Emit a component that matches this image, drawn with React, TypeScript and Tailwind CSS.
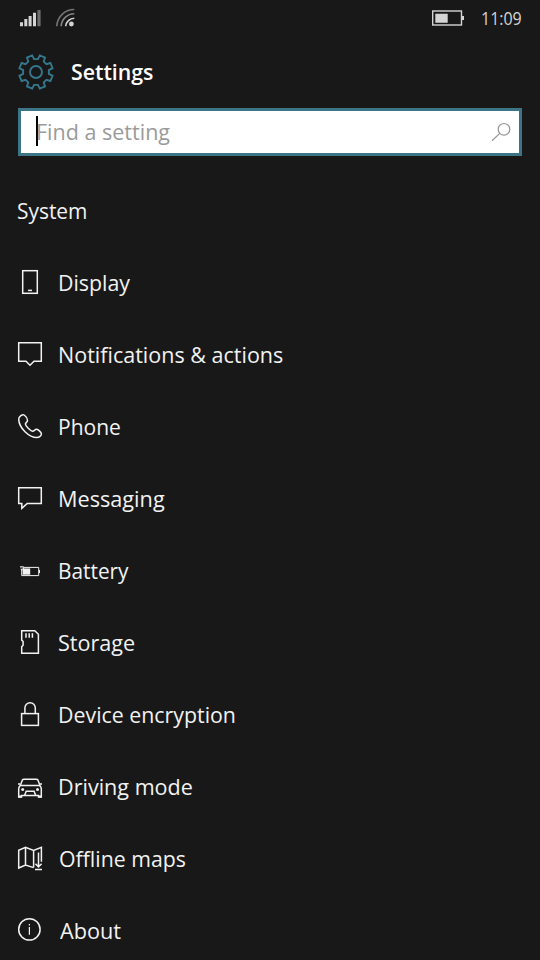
import React from "react";

type Item = { label: string; icon: React.ReactNode; className: string };

const gearPath = () => {
  const points: string[] = [];
  const add = (r: number, deg: number) => {
    const a = (deg * Math.PI) / 180;
    points.push(`${(18 + r * Math.cos(a)).toFixed(2)} ${(18 + r * Math.sin(a)).toFixed(2)}`);
  };
  for (let i = 0; i < 8; i++) {
    const mid = 22.5 + i * 45;
    add(13, mid - 14);
    add(17, mid - 9.5);
    add(17, mid + 9.5);
    add(13, mid + 14);
  }
  return `M${points.join("L")}Z`;
};

const items: Item[] = [
  {
    label: "Display",
    className: "scale-x-[0.97]",
    icon: (
      <>
        <rect x="8.7" y="3.7" width="14.6" height="22.6" />
        <path d="M14 23.4h4" />
      </>
    ),
  },
  {
    label: "Notifications & actions",
    className: "scale-x-[0.978]",
    icon: <path d="M4.7 3.7h22.6v18.6H20l-4 3.9-4-3.9H4.7Z" />,
  },
  {
    label: "Phone",
    className: "scale-x-[0.955]",
    icon: (
      <path d="M10.2 4C8.7 2.8 4.6 5.6 4.7 8.4C4.9 12.6 7.2 17 11 20.7C14.5 24.1 19.3 26.5 22.9 26.5C25.3 26.5 27.4 24.8 27.4 23.1C27.4 21.4 24.3 18.5 22.6 18.3C21 18.1 20 20.5 18.5 20.3C16.6 20 11.4 15 11.4 13C11.4 11.7 13.7 11.3 13.5 9.3C13.4 7.6 11.7 5.1 10.2 4Z" />
    ),
  },
  {
    label: "Messaging",
    className: "scale-x-[0.985]",
    icon: <path d="M4.7 4.8h22.6v15.6H13.2L7.8 25.4v-5H4.7Z" />,
  },
  {
    label: "Battery",
    className: "scale-x-[0.947]",
    icon: (
      <>
        <path d="M10 12.4h14.7v8.2H7.7v-5.4" strokeWidth="1" />
        <path d="M25.5 15v3" strokeWidth="1" />
        <path d="M8.6 13.4h7.6v6.3H8.6Z" fill="currentColor" stroke="none" />
        <path d="M6 12h3.4v2.2H6.6M7 11v1M9 11v1M7.7 14v2" strokeWidth="0.9" />
      </>
    ),
  },
  {
    label: "Storage",
    className: "scale-x-[0.98]",
    icon: (
      <>
        <path d="M7.7 3.8h13.1l3.6 3.5v19H7.7v-6.6l1.4-1.5v-3.6l-1.4-1.5Z" />
        <path d="M12 6.3v4.4M15.2 6.3v4.4M18.4 6.3v4.4" />
      </>
    ),
  },
  {
    label: "Device encryption",
    className: "scale-x-[0.97]",
    icon: (
      <>
        <rect x="7.6" y="14.6" width="16.8" height="11.8" />
        <path d="M10.9 14.6V9a5.2 5.2 0 0 1 10.4 0v5.6" />
      </>
    ),
  },
  {
    label: "Driving mode",
    className: "scale-x-[0.98]",
    icon: (
      <>
        <path d="M6.3 14.6 8.3 9.2Q8.8 8.2 10 8.2h12.3q1.2 0 1.7 1l2 5.4" />
        <path d="M4 13h2.2M28 13h-2.2M6 14.6h20M6.2 14.6Q4.7 16 4.7 18v8h2.8v-1.6h17v1.6h2.8v-8q0-2-1.5-3.4" />
        <path d="m10.6 24.4 1.6-4.2h7.9l1.6 4.2" />
        <circle cx="8.7" cy="18.4" r="1.5" fill="currentColor" stroke="none" />
        <circle cx="23.5" cy="18.4" r="1.5" fill="currentColor" stroke="none" />
        <path d="M4.3 25.6h3.4M24.3 25.6h3.4" strokeWidth="2" />
      </>
    ),
  },
  {
    label: "Offline maps",
    className: "ml-px scale-x-[0.968]",
    icon: (
      <>
        <path d="M19.6 24.6 11.5 22 4.7 25V7.2l6.8-2.9 8.1 3.2 7.8-3.2v14.5M11.5 4.3V22M19.6 7.5v17.1" />
        <path d="M24.5 9.5v14.3M21.4 20.8l3.1 3.1 3.1-3.1M21 26.4h7" />
      </>
    ),
  },
  {
    label: "About",
    className: "ml-0.5 scale-x-[0.985]",
    icon: (
      <>
        <circle cx="15.4" cy="14.4" r="10.7" />
        <path d="M15.4 12v7.7M15.4 9v1.5" strokeWidth="1.2" />
      </>
    ),
  },
];

const StatusBar = () => (
  <div className="flex h-9 items-center text-[#d4d4d4]">
    <svg width="80" height="36" viewBox="0 0 80 36" fill="none">
      <path
        d="M20 22.3h3v4h-3ZM24.3 19h3v7.3h-3ZM28.6 15.9h3v10.4h-3ZM33 12.8h3v13.5h-3Z"
        fill="currentColor"
      />
      <path d="M37.4 10h3.2v16.3h-3.2Z" fill="#6e6e6e" />
      <g strokeWidth="1.6">
        <path d="M56.8 26.3A17.3 17.3 0 0 1 74.3 9.5" stroke="#747474" />
        <path d="M61.2 26.3A13 13 0 0 1 74.3 13.8" stroke="#858585" />
        <path d="M65.7 26.3A8.7 8.7 0 0 1 74.3 18.2" stroke="currentColor" />
      </g>
      <circle cx="71.4" cy="24" r="2.4" fill="currentColor" />
    </svg>
    <svg className="ml-auto" width="34" height="36" viewBox="0 0 34 36" fill="none">
      <rect x="0.7" y="11" width="28.8" height="14" stroke="currentColor" strokeWidth="1.4" />
      <path d="M30 16h2v4h-2ZM3.3 13.7h12.4v9H3.3Z" fill="currentColor" />
    </svg>
    <span className="mr-[18px] ml-[15px] w-[41px] origin-left scale-x-[0.84] whitespace-nowrap text-[19px]">11:09</span>
  </div>
);

export default function App() {
  return (
    <div className="h-[960px] w-[540px] overflow-hidden bg-[#181818] font-['Open_Sans','Noto_Sans',sans-serif] text-white">
      <StatusBar />

      {/* Page title */}
      <header className="flex h-[72px] items-center pl-[18px]">
        <svg className="text-[#35778b]" width="36" height="36" viewBox="0 0 36 36" fill="none" stroke="currentColor" strokeWidth="1.9">
          <path d={gearPath()} />
          <circle cx="18" cy="18" r="6" />
        </svg>
        <h1 className="ml-[17px] origin-left scale-x-[0.968] pb-0.5 text-[22px] font-semibold">Settings</h1>
      </header>

      {/* Search box */}
      <div className="mx-[18px] flex h-12 items-center border-3 border-[#3b7586] bg-white pl-[15px] pr-1.5">
        <span className="mb-0.5 h-[30px] w-0.5 bg-black" />
        <span className="-ml-0.5 origin-left scale-x-[0.978] pb-0.5 text-[22px] text-[#9a9a9a]">Find a setting</span>
        <svg className="ml-auto" width="22" height="22" viewBox="0 0 22 22" fill="none" stroke="#949494" strokeWidth="1.2">
          <circle cx="13" cy="8.3" r="5.8" />
          <path d="M8.8 12.4 1 19.8" />
        </svg>
      </div>

      <h2 className="mt-[19px] flex h-[72px] items-center pb-0.5 text-[22px] text-[#f2f2f2]">
        <span className="ml-[17px] origin-left scale-x-[0.95]">System</span>
      </h2>

      <ul className="text-[22px] text-[#f2f2f2]">
        {items.map(({ label, icon, className }) => (
          <li key={label} className="flex h-[72px] items-center gap-3 pl-3.5">
            <svg width="32" height="32" viewBox="0 0 32 32" fill="none" stroke="currentColor" strokeWidth="1.5">
              {icon}
            </svg>
            <span className={`origin-left whitespace-nowrap pb-0.5 ${className}`}>{label}</span>
          </li>
        ))}
      </ul>
    </div>
  );
}
